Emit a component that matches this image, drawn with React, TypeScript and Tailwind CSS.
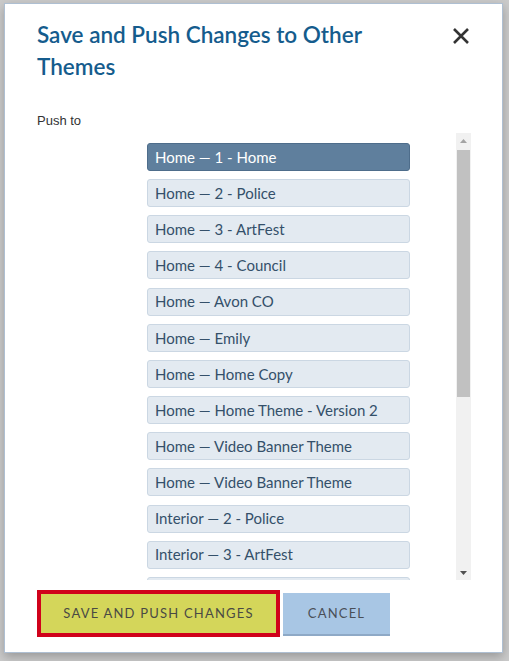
import React from "react";

const themes = [
  "Home — 1 - Home",
  "Home — 2 - Police",
  "Home — 3 - ArtFest",
  "Home — 4 - Council",
  "Home — Avon CO",
  "Home — Emily",
  "Home — Home Copy",
  "Home — Home Theme - Version 2",
  "Home — Video Banner Theme",
  "Home — Video Banner Theme",
  "Interior — 2 - Police",
  "Interior — 3 - ArtFest",
  "Interior — 4 - Council",
  "Interior — Avon CO",
  "Interior — Emily",
  "Interior — Home Copy",
  "Interior — Interior Theme",
  "Interior — Video Banner Theme",
  "Interior — Video Banner Theme",
  "Interior — Version 2",
];

const App = () => {
  return (
    <div className="min-h-[661px] w-[509px] bg-[#cbcbcb] pt-[3px] pl-[4px] overflow-hidden font-['Lato',sans-serif]">
      <div className="w-[499px] h-[650px] bg-white border border-[#aebfd2] shadow-[0_4px_10px_rgba(0,0,0,0.25)] flex flex-col pl-[32px]">
        {/* header */}
        <div className="flex justify-between items-start pt-[15px] pr-[32px]">
          <h2 className="text-[22.5px] leading-[32px] font-semibold text-[#155c8d] w-[370px]">
            Save and Push Changes to Other Themes
          </h2>
          <button className="mt-[8px] text-[#333]">
            <svg width="18" height="18" viewBox="0 0 18 18">
              <path d="M2 2 L16 16 M16 2 L2 16" stroke="currentColor" strokeWidth="2.6" />
            </svg>
          </button>
        </div>

        <p className="mt-[30px] text-[13px] leading-[15px] text-[#333] font-['Liberation_Sans',sans-serif]">
          Push to
        </p>

        {/* theme list with scrollbar */}
        <div className="mt-[5px] w-[434px] h-[447px] flex">
          <div className="flex-1 overflow-hidden">
            <ul className="flex flex-col gap-[8.17px] pt-[10px] pl-[110px]">
              {themes.map((name, i) => (
                <li
                  key={i}
                  className={`w-[263px] h-[28px] flex items-center px-[7px] rounded-[3px] border text-[15px] ${
                    i === 0
                      ? "bg-[#5f7f9d] border-[#4e6d8b] text-white"
                      : "bg-[#e3eaf1] border-[#cbd7e3] text-[#34506a]"
                  }`}
                >
                  {name}
                </li>
              ))}
            </ul>
          </div>
          <div className="w-[15px] h-full bg-[#f1f1f1] flex flex-col items-center">
            <div className="h-[15px] flex items-center justify-center">
              <svg width="7" height="4" viewBox="0 0 7 4">
                <path d="M0 4 L3.5 0 L7 4 Z" fill="#a3a3a3" />
              </svg>
            </div>
            <div className="mt-[2px] w-[13px] h-[247px] bg-[#c1c1c1]" />
            <div className="flex-1" />
            <div className="h-[15px] flex items-center justify-center">
              <svg width="7" height="4" viewBox="0 0 7 4">
                <path d="M0 0 L7 0 L3.5 4 Z" fill="#505050" />
              </svg>
            </div>
          </div>
        </div>

        {/* actions */}
        <div className="flex items-start gap-[3px] mt-[10px]">
          <button className="w-[243px] h-[47px] bg-[#d4d65a] border-[4px] border-[#d0021b] text-[13px] tracking-[1.2px] text-[#4a4a44]">
            SAVE AND PUSH CHANGES
          </button>
          <button className="mt-[3px] w-[107px] h-[43px] bg-[#a8c6e4] border-b-[2px] border-[#8ea9c6] text-[13px] tracking-[1.2px] text-[#4a4f58]">
            CANCEL
          </button>
        </div>
      </div>
    </div>
  );
};

export default App;
